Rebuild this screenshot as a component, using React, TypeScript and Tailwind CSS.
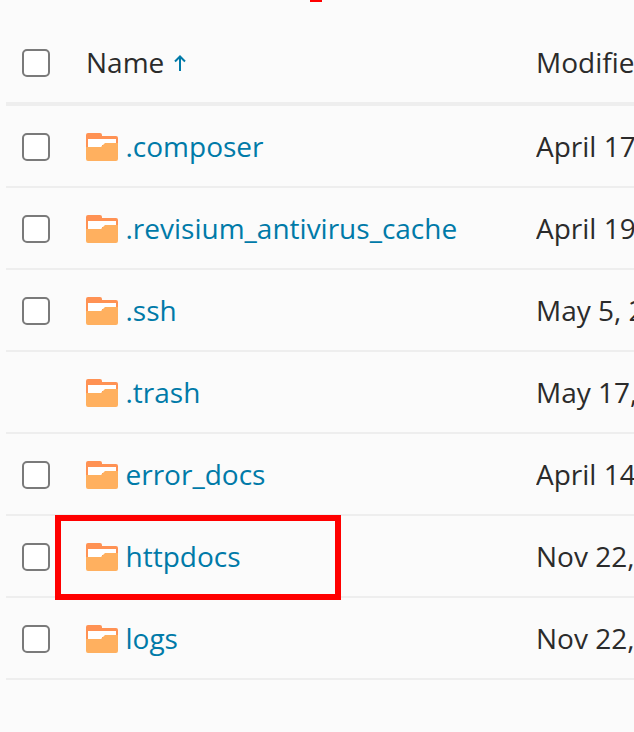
const rows = [
  { name: ".composer", date: "April 17, 2023", check: true },
  { name: ".revisium_antivirus_cache", date: "April 19, 2023", check: true },
  { name: ".ssh", date: "May 5, 2023", check: true },
  { name: ".trash", date: "May 17, 2023", check: false },
  { name: "error_docs", date: "April 14, 2023", check: true },
  { name: "httpdocs", date: "Nov 22, 2023", check: true, marked: true },
  { name: "logs", date: "Nov 22, 2023", check: true },
];

function Check() {
  return <span className="block w-7 h-7 mt-[2px] rounded-[5px] border-2 border-[#7a7a7a] bg-white shrink-0" />;
}

function Folder() {
  return (
    <svg width="32" height="28" viewBox="0 0 32 28" className="shrink-0 mt-[2px]">
      <path d="M0 2a2 2 0 0 1 2-2h12a2 2 0 0 1 2 2v1h14a2 2 0 0 1 2 2v9H0z" fill="#ff9254" />
      <path d="M2 6h28v6H2z" fill="#fff" />
      <path d="M2 6h14v8H2z" fill="#fff" />
      <path d="M0 14h15l4-4h13v16a2 2 0 0 1-2 2H2a2 2 0 0 1-2-2z" fill="#ffb05f" />
    </svg>
  );
}

function ArrowUp() {
  return (
    <svg width="12" height="16" viewBox="0 0 12 16" className="shrink-0 mt-[2px]" fill="none" stroke="#007aa8" strokeWidth="2">
      <path d="M6 16V1.5" />
      <path d="M1 6.5L6 1.5L11 6.5" />
    </svg>
  );
}

export default function App() {
  return (
    <div className="relative w-[634px] h-[732px] overflow-hidden bg-[#fbfbfb] font-['Open_Sans','Noto_Sans',sans-serif] text-[28px] text-[#2b2b2b]">
      <div className="absolute left-[310px] top-0 w-3 h-[2px] bg-[#ff0000]" />
      <div className="ml-[6px] w-[628px]">
        <div className="flex items-center h-[106px] pt-[22px] border-b-4 border-[#eeeeee] box-border overflow-hidden">
          <div className="w-[80px] shrink-0 pl-4 flex"><Check /></div>
          <div className="w-[450px] shrink-0 flex items-center gap-[10px] whitespace-nowrap">
            <span>Name</span>
            <ArrowUp />
          </div>
          <div className="whitespace-nowrap">Modified</div>
        </div>
        {rows.map((r) => (
          <div key={r.name} className="relative flex items-center h-[82px] border-b-2 border-[#eeeeee] box-border">
            <div className="w-[80px] shrink-0 pl-4 flex">{r.check && <Check />}</div>
            <div className="w-[450px] shrink-0 flex items-center gap-[7.5px] whitespace-nowrap text-[#007aa8]">
              <Folder />
              <span>{r.name}</span>
            </div>
            <div className="whitespace-nowrap overflow-hidden">{r.date}</div>
            {r.marked && <div className="absolute left-[49px] top-[-1px] w-[286px] h-[85px] border-[6px] border-[#ff0000]" />}
          </div>
        ))}
      </div>
    </div>
  );
}
